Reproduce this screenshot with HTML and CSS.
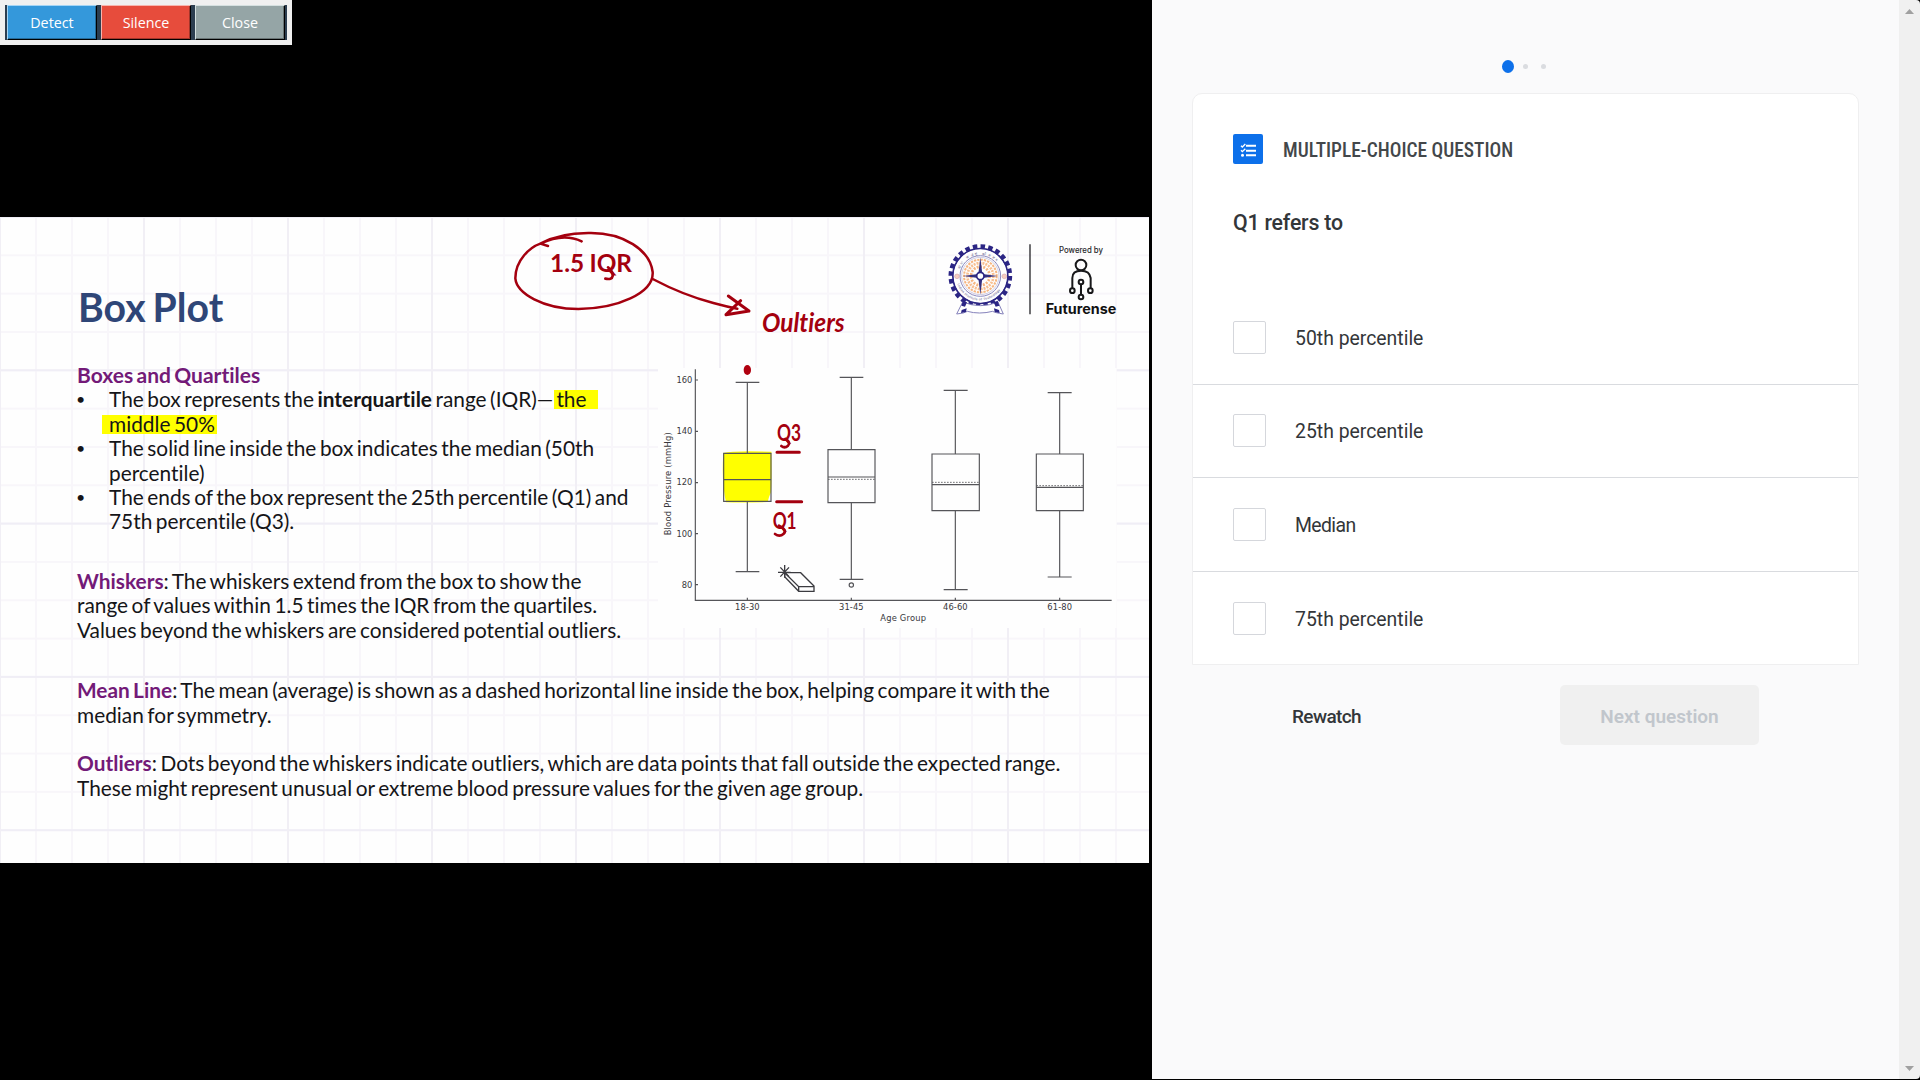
FILE: index.html
```
<!DOCTYPE html>
<html lang="en">
<head>
<meta charset="utf-8">
<title>Box Plot – Multiple-choice question</title>
<link rel="stylesheet" href="styles.css">
</head>
<body>
<div class="screen">
  <section class="video">
    <div class="slide">
      <header class="slide-head">
        <h1>Box Plot</h1>
        <svg class="logos" width="260" height="130" viewBox="0 0 780 390">
          <g fill="none" stroke="#2b2584">
            <circle cx="241" cy="198" r="89" stroke-width="13" stroke-dasharray="13.5 9.8"/>
            <circle cx="241" cy="198" r="82" stroke-width="6"/>
            <circle cx="241" cy="198" r="77" stroke="#fff" stroke-width="6"/>
            <circle cx="241" cy="198" r="61" stroke="#8d8abf" stroke-width="3"/>
            <circle cx="241" cy="198" r="56" stroke="#b9b7d8" stroke-width="2"/>
          </g>
          <path d="M170 312l18-36q54 22 106 0l16 36q-26-4-32-8-40 10-76 0-8 6-32 8z" fill="#fff" stroke="#8582bb" stroke-width="3"/>
          <path d="M189 272l12 5-6 13-11-3zM293 272l-12 5 6 13 11-3zM185 300l15-5-2 11-15 3zM297 300l-15-5 2 11 15 3z" fill="#2b2584"/>
          <circle cx="241" cy="198" r="49" fill="none" stroke="#f6b681" stroke-width="6" stroke-dasharray="7 3"/>
          <circle cx="241" cy="198" r="39" fill="none" stroke="#f8bf91" stroke-width="8" stroke-dasharray="6 3"/>
          <circle cx="241" cy="198" r="28" fill="none" stroke="#f6b681" stroke-width="8" stroke-dasharray="6 4"/>
          <path d="M241 142l6 50 46 6-46 6-6 50-6-50-46-6 46-6z" fill="#343080"/>
          <circle cx="241" cy="198" r="11" fill="#fff" stroke="#2b2584" stroke-width="5"/>
          <circle cx="171" cy="199" r="7" fill="#f6cdbf" stroke="#d7a8ae" stroke-width="2"/>
          <circle cx="313" cy="199" r="7" fill="#f6cdbf" stroke="#d7a8ae" stroke-width="2"/>
          <path id="arcTop" d="M180 177A65 65 0 0 1 302 177" fill="none"/>
          <path id="arcBottom" d="M172 222A73 73 0 0 0 310 222" fill="none"/>
          <text class="seal"><textPath href="#arcTop" textLength="132">योगः कर्मसु कौशलम्</textPath></text>
          <text class="seal"><textPath href="#arcBottom" textLength="160">Indian Institute of Technology</textPath></text>
          <path d="M390 103v210" stroke="#26262a" stroke-width="4"/>
          <text class="powered" x="477" y="130" textLength="132" lengthAdjust="spacingAndGlyphs">Powered by</text>
          <g fill="none" stroke="#18181a" stroke-width="6">
            <circle cx="543" cy="165" r="16"/>
            <path d="M517 234v-30q0-22 26-22t29 22v30M543 223v30"/>
            <circle cx="517" cy="242" r="7"/><circle cx="571" cy="242" r="7"/>
            <circle cx="543" cy="216" r="7"/><circle cx="543" cy="261" r="7"/>
          </g>
          <text class="brand" x="437" y="311" textLength="212" lengthAdjust="spacingAndGlyphs">Futurense</text>
        </svg>
      </header>

      <div class="slide-main">
        <div class="slide-text">
          <h2>Boxes and Quartiles</h2>
          <ul>
            <li>The box represents the <b>interquartile</b> range (IQR)<span class="dash">—</span><mark class="m1">the</mark><br><mark class="m2">middle 50%</mark></li>
            <li>The solid line inside the box indicates the median (50th<br>percentile)</li>
            <li>The ends of the box represent the 25th percentile (Q1) and<br>75th percentile (Q3).</li>
          </ul>
          <p class="whiskers"><strong>Whiskers</strong>: The whiskers extend from the box to show the<br>range of values within 1.5 times the IQR from the quartiles.<br>Values beyond the whiskers are considered potential outliers.</p>
        </div>
        <svg class="chart" width="509" height="279" viewBox="0 0 1527 837">
          <path class="paper" d="M54 54h1376v780H54z"/>
          <path d="M250 309q30-8 144-4 2 80-1 122-6 12-10 29-70 3-125 1-14-60-8-148z" fill="#ff0"/>
          <g class="axis">
            <path d="M166 58v693h1249M166 90h8M166 244h8M166 398h8M166 551h8M166 704h8M322 751v-8M634 751v-8M946 751v-8M1259 751v-8"/>
          </g>
          <g class="boxes">
            <path d="M251 310h142v144H251zM322 310V97M287 97h71M322 454v211M287 665h71M251 389h142"/>
            <path d="M564 299h141v159H564zM634 299V82M599 82h71M634 458v230M599 688h71M564 381h141"/>
            <path d="M876 312h142v170H876zM946 312V121M911 121h72M946 482v237M911 719h72M876 404h142"/>
            <path d="M1189 312h141v170h-141zM1259 312V128M1223 128h72M1259 482v199M1223 681h72M1189 412h141"/>
            <circle cx="634" cy="705" r="6.5"/>
            <path class="mean" d="M564 388h141M876 397h142M1189 407h141"/>
          </g>
          <g class="ticks">
            <text x="157" y="99" text-anchor="end">160</text>
            <text x="157" y="253" text-anchor="end">140</text>
            <text x="157" y="406" text-anchor="end">120</text>
            <text x="157" y="560" text-anchor="end">100</text>
            <text x="157" y="713" text-anchor="end">80</text>
            <text x="285" y="779" textLength="74">18-30</text>
            <text x="597" y="779" textLength="74">31-45</text>
            <text x="909" y="779" textLength="74">46-60</text>
            <text x="1222" y="779" textLength="74">61-80</text>
            <text x="721" y="814" textLength="137">Age Group</text>
            <text transform="translate(92 556) rotate(-90)" textLength="309">Blood Pressure (mmHg)</text>
          </g>
          <g class="eraser">
            <path d="M434 668h48l40 40v16h-46l-42-44zM434 668l42 42h46M476 710v14"/>
            <path d="M414 667h38M434 645v38M421 652l26 28M447 652l-26 28" stroke-width="3"/>
          </g>
          <g class="ink">
            <ellipse cx="322" cy="60" rx="11" ry="15" class="dot"/>
            <path d="M411 307h67M410 455h75" stroke-width="9"/>
            <text x="411" y="272" textLength="72" font-size="66" lengthAdjust="spacingAndGlyphs">Q3</text>
            <path d="M424 288q10 8 20-1t-8-20" stroke-width="8"/>
            <text x="398" y="538" textLength="72" font-size="66" lengthAdjust="spacingAndGlyphs">Q1</text>
            <path d="M405 552q14 10 26-1t-14-24" stroke-width="8"/>
          </g>
        </svg>
      </div>

      <p class="mean-line"><strong>Mean Line</strong>: The mean (average) is shown as a dashed horizontal line inside the box, helping compare it with the<br>median for symmetry.</p>
      <p class="outliers"><strong>Outliers</strong>: Dots beyond the whiskers indicate outliers, which are data points that fall outside the expected range.<br>These might represent unusual or extreme blood pressure values for the given age group.</p>

      <svg class="notes" width="400" height="150" viewBox="0 0 1200 450">
        <g class="ink">
          <path d="M144 108L121 101Q180 68 270 69C370 68 450 120 458 186C462 250 350 296 235 297C130 297 50 250 46 205C46 150 90 112 121 101M121 101Q190 68 245 94" stroke-width="7.5"/>
          <path d="M458 207C530 245 590 266 640 279Q680 290 712 296" stroke-width="7.5"/>
          <path d="M685 258L747 303L678 314L722 272" stroke-width="9"/>
          <text x="150" y="185" textLength="246" font-size="76" lengthAdjust="spacingAndGlyphs">1.5 IQR</text>
          <path d="M316 206q20 4 22-8t-14-26" stroke-width="8"/>
          <text class="slanted" x="786" y="366" textLength="248" font-size="82" lengthAdjust="spacingAndGlyphs">Oultiers</text>
        </g>
      </svg>
    </div>
  </section>

  <main class="quiz">
    <div class="progress"><i class="on"></i><i></i><i></i></div>
    <div class="card">
      <div class="kind">
        <svg width="30" height="30" viewBox="0 0 90 90">
          <rect width="90" height="90" rx="6" fill="#0d70ea"/>
          <g fill="none" stroke="#fff">
            <path d="M39 35h30M39 50h30M39 64h30" stroke-width="6"/>
            <path d="M24 35l4 4 9-9M24 49l4 4 9-9" stroke-width="4"/>
          </g>
          <circle cx="28.500" cy="64" r="4.500" fill="#fff"/>
        </svg>
        <span>MULTIPLE-CHOICE QUESTION</span>
      </div>
      <h3>Q1 refers to</h3>
      <label class="option"><i></i><span>50th percentile</span></label>
      <label class="option"><i></i><span>25th percentile</span></label>
      <label class="option"><i></i><span class="med">Median</span></label>
      <label class="option"><i></i><span>75th percentile</span></label>
    </div>
    <div class="actions">
      <a>Rewatch</a>
      <button disabled>Next question</button>
    </div>
  </main>

  <div class="scroll">
    <svg width="9" height="5" viewBox="0 0 9 5"><path d="M0 5L4.500 0L9 5z" fill="#a0a0a0"/></svg>
    <svg width="9" height="5" viewBox="0 0 9 5"><path d="M0 0L4.500 5L9 0z" fill="#a0a0a0"/></svg>
  </div>
</div>

<div class="toolbar">
  <div class="tools">
    <button class="blue">Detect</button>
    <button class="red">Silence</button>
    <button class="gray">Close</button>
  </div>
</div>
</body>
</html>
```
FILE: styles.css
```
* { box-sizing: border-box; margin: 0; padding: 0; }
body { background: #000; width: 1920px; height: 1080px; overflow: hidden; }
i { font-style: normal; }

.screen { display: grid; grid-template-columns: 1152px 747px 21px; height: 1079px; }

/* video frame with the lecture slide */
.video { background: #000; padding-top: 217px; }
.slide {
  position: relative;
  width: 1149px;
  height: 646px;
  padding-left: 77px;
  background-color: #fefefe;
  background-image:
    linear-gradient(90deg, #f1eff5 2px, transparent 2px),
    linear-gradient(#f0eef6 2px, transparent 2px),
    linear-gradient(90deg, #f8f6fa 2px, transparent 2px),
    linear-gradient(#f8f6fa 2px, transparent 2px);
  background-size: 144px 100%, 100% 153.300px, 36px 100%, 100% 38.330px;
  background-position: -1px 0, 0 -1px, -1px 0, 0 -1px;
  font: 20.850px/24.400px Lato, sans-serif;
  word-spacing: -1.800px;
  font-variant-ligatures: none;
  color: #151518;
  white-space: nowrap;
}
.slide-head { display: flex; justify-content: space-between; height: 146px; }
.slide-head h1 { padding: 67px 0 0 1px; font-size: 39.200px; line-height: 46px; word-spacing: -2.500px; color: #2f4677; }
.logos { margin: -7px -11px 0 0; flex: none; word-spacing: 0; }
.seal { font: 10px "Liberation Sans", sans-serif; fill: #55517f; }
.powered { font: 500 25px Inter, sans-serif; fill: #29292c; }
.brand { font: 700 42px Inter, sans-serif; fill: #111; }

.slide-main { display: grid; grid-template-columns: 563px 509px; height: 279.300px; }
.slide h2 { font-size: 21px; }
.slide h2, .slide strong { color: #731a78; }
.slide ul { list-style: none; padding-left: 32px; }
.slide li::before { content: "•"; float: left; margin-left: -33px; font-size: 16px; }
mark { color: inherit; background: linear-gradient(#ff0, #ff0) no-repeat 0 4px / 100% 19px; }
.dash { margin-right: 3px; }
.m1 { padding: 0 12px 0 2px; margin-left: -2px; }
.m2 { padding: 0 2px 0 7px; margin-left: -7px; }
.whiskers { padding-top: 35px; }
.mean-line { padding-top: 36px; }
.outliers { padding-top: 24px; }

.chart { margin-top: -13px; word-spacing: 0; }
.paper { fill: #fefefe; }
.axis path, .boxes path, .boxes circle { fill: none; stroke: #555559; stroke-width: 3.500; }
.boxes .mean { stroke-dasharray: 5 4; stroke-width: 2.500; }
.ticks { font: 25px "DejaVu Sans", sans-serif; fill: #38383c; }
.eraser path { fill: none; stroke: #3b3b40; stroke-width: 4; }
.ink path { fill: none; stroke: #a4000f; stroke-linecap: round; stroke-linejoin: round; }
.ink .dot { fill: #b0000f; }
.ink text { font-family: Lato, sans-serif; font-weight: 700; fill: #a4000f; }
.ink .slanted { font-style: italic; }
.notes { position: absolute; left: 500px; top: -7px; }

/* question panel */
.quiz { background: #fafafb; padding: 60px 40px 0; font-family: Roboto, sans-serif; font-stretch: 87.500%; color: #333639; }
.progress { display: flex; align-items: center; justify-content: center; gap: 13px; height: 13px; padding-right: 4px; }
.progress i { width: 5px; height: 5px; border-radius: 50%; background: #dadce0; }
.progress .on { width: 12px; height: 13px; background: #0d70ea; margin-right: -4px; }
.card { width: 667px; height: 572px; margin-top: 20px; background: #fff; border: 1px solid #efeff0; border-radius: 10px 10px 0 0; }
.kind { display: flex; align-items: center; gap: 20px; padding: 40px 0 0 40px; font-size: 19.400px; font-weight: 500; line-height: 30px; color: #43474a; }
.kind span { position: relative; top: 2px; }
.card h3 { padding: 42px 0 0 40px; height: 127.400px; font-size: 21.300px; font-weight: 500; font-stretch: 89%; letter-spacing: -.2px; line-height: 34px; }
.option { display: flex; align-items: center; gap: 29px; height: 93.400px; padding-left: 40px; border-bottom: 1px solid #d9dbdf; font-size: 19.400px; }
.option:last-child { border: 0; }
.option i { width: 33px; height: 33px; border: 1px solid #d5d7dc; border-radius: 2px; }
.option span { font-stretch: 97%; padding-top: 2px; }
.option .med { letter-spacing: -.6px; }
.actions { display: flex; justify-content: space-between; align-items: center; margin-top: 20px; padding: 0 100px 0 99px; height: 60px; font-size: 19px; font-weight: 500; }
.actions a { padding: 2px 0 0 1px; font-stretch: 89%; letter-spacing: -.6px; }
.actions button { width: 199px; height: 60px; padding-top: 2px; border: 0; border-radius: 5px; background: #f0f0f0; color: #c1c6cc; font: 600 19px Roboto, sans-serif; font-stretch: 94%; }

.scroll { display: flex; flex-direction: column; justify-content: space-between; padding: 9px 0 8px 6px; background: #f0f0f0; border-top-right-radius: 4px; border-bottom-right-radius: 4px; }

/* floating control window */
.toolbar { position: absolute; left: 0; top: 0; width: 292px; height: 45px; padding: 5px; background: #f0f0f0; }
.tools { display: flex; gap: 4px; width: 282px; height: 35px; padding-left: 2px; background: #2c3e50; }
.tools button { width: 90px; height: 35px; border: 1px solid; color: #fff; font: 14.300px "Open Sans", "Noto Sans", sans-serif; }
.tools .blue { background: #3498db; border-color: #a5d5f5 #000 #000 #a5d5f5; box-shadow: inset -1px -1px #246a99; }
.tools .red { background: #e74c3c; border-color: #f7b5ae #000 #000 #f7b5ae; box-shadow: inset -1px -1px #a1352a; }
.tools .gray { background: #95a5a6; border-color: #d5e0e0 #000 #000 #d5e0e0; box-shadow: inset -1px -1px #687374; }
```
